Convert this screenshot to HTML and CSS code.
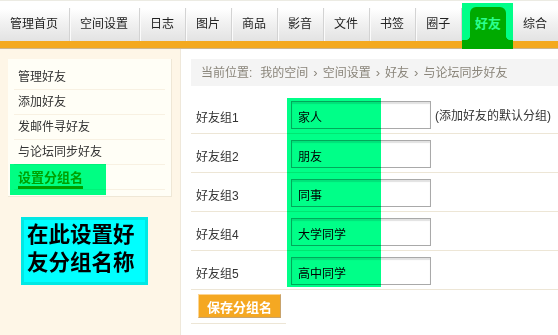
FILE: index.html
```html
<!DOCTYPE html>
<html lang="zh-CN">
<head>
  <meta charset="UTF-8">
  <title>好友 - 设置分组名</title>
  <link rel="stylesheet" href="styles.css">
</head>
<body>
  <!-- Top Navigation -->
  <div class="topbar">
    <ul class="nav">
      <li class="nav-item">管理首页</li>
      <li class="nav-item">空间设置</li>
      <li class="nav-item">日志</li>
      <li class="nav-item">图片</li>
      <li class="nav-item">商品</li>
      <li class="nav-item">影音</li>
      <li class="nav-item">文件</li>
      <li class="nav-item">书签</li>
      <li class="nav-item">圈子</li>
      <li class="nav-item current"><span class="current-tab">好友</span></li>
      <li class="nav-item last">综合</li>
    </ul>
  </div>
  <div class="orange-bar"></div>

  <div class="page">
    <!-- Side Menu -->
    <aside class="sidebar">
      <ul class="side-menu">
        <li>管理好友</li>
        <li>添加好友</li>
        <li>发邮件寻好友</li>
        <li>与论坛同步好友</li>
        <li class="active"><span>设置分组名</span></li>
      </ul>
      <div class="note">在此设置好<br>友分组名称</div>
      <div class="mark mark-side"></div>
    </aside>

    <!-- Main Content -->
    <main class="main">
      <div class="crumb">
        <span class="crumb-lead">当前位置:</span>我的空间<span class="sep">&rsaquo;</span>空间设置<span class="sep">&rsaquo;</span>好友<span class="sep">&rsaquo;</span>与论坛同步好友
      </div>

      <div class="group-row">
        <label class="group-label">好友组1</label>
        <input class="group-input" type="text" value="家人">
        <span class="hint">(添加好友的默认分组)</span>
      </div>
      <div class="group-row">
        <label class="group-label">好友组2</label>
        <input class="group-input" type="text" value="朋友">
      </div>
      <div class="group-row">
        <label class="group-label">好友组3</label>
        <input class="group-input" type="text" value="同事">
      </div>
      <div class="group-row">
        <label class="group-label">好友组4</label>
        <input class="group-input" type="text" value="大学同学">
      </div>
      <div class="group-row">
        <label class="group-label">好友组5</label>
        <input class="group-input" type="text" value="高中同学">
      </div>

      <div class="save-row">
        <button class="save-button">保存分组名</button>
      </div>

      <div class="mark mark-main"></div>
    </main>
  </div>
</body>
</html>
```

FILE: styles.css
```css
/* General Reset and Layout */
body {
  margin: 0;
  font-family: "Liberation Sans", "Noto Sans CJK SC", sans-serif;
  font-size: 12px;
  color: #333;
  background-color: #fff;
  height: 100vh;
  overflow: hidden;
  display: flex;
  flex-direction: column;
}

ul {
  margin: 0;
  padding: 0;
  list-style: none;
}

/* Top navigation */
.topbar {
  flex: none;
  height: 40px;
  border-top: 1px solid #ecebe3;
  background: linear-gradient(#fff 0, #fff 8px, #f1f1f1 22px, #e3e3e3 40px);
}

.nav {
  display: flex;
  align-items: flex-end;
  height: 100%;
}

.nav-item {
  height: 33px;
  line-height: 33px;
  padding: 0 11px 0 10px;
  border-right: 1px solid #d3d3d3;
  box-shadow: 1px 0 0 #fbfbfb;
  color: #222;
  white-space: nowrap;
}

.nav-item.last {
  border-right: none;
  box-shadow: none;
}

.nav-item.current {
  position: relative;
  z-index: 2;
  height: 46px;
  margin-bottom: -8px;
  padding: 4px 7px 0 8px;
  box-sizing: border-box;
  width: 59px;
  border-right: none;
  box-shadow: none;
  background: linear-gradient(#00ff88 0, #00ff88 37px, #00aa00 37px);
}

.current-tab {
  position: relative;
  display: block;
  height: 42px;
  line-height: 34px;
  text-align: center;
  border-radius: 6px 6px 0 0;
  background-color: #00aa00;
  color: #2bff8e;
  font-weight: bold;
  font-size: 13px;
}

/* little concave corners where the tab meets the bar */
.current-tab::before,
.current-tab::after {
  content: "";
  position: absolute;
  bottom: 9px;
  width: 5px;
  height: 5px;
}

.current-tab::before {
  left: -5px;
  background: radial-gradient(circle at 0 0, transparent 5px, #00aa00 5.5px);
}

.current-tab::after {
  right: -5px;
  background: radial-gradient(circle at 100% 0, transparent 5px, #00aa00 5.5px);
}

.orange-bar {
  flex: none;
  height: 7px;
  background-color: #f4a91f;
  border-bottom: 1px solid #cdb58c;
}

/* Page body */
.page {
  flex: 1;
  display: flex;
  min-height: 0;
}

.sidebar {
  position: relative;
  flex: none;
  width: 164px;
  padding: 10px 8px;
  background-color: #fef6e7;
  border-right: 1px solid #efe8da;
}

.side-menu {
  padding: 6px 6px 6px;
  background-color: #fffef6;
  border-right: 1px solid #efe7d6;
  border-bottom: 1px solid #efe7d6;
}

.side-menu li {
  height: 24px;
  line-height: 25px;
  padding-left: 4px;
  border-bottom: 1px solid #f8f1e2;
}

.side-menu li.active span {
  position: relative;
  z-index: 1;
  color: #00a000;
  font-weight: bold;
  font-size: 13px;
  text-decoration: underline;
  text-decoration-thickness: 3px;
  text-underline-offset: 4px;
}

.note {
  width: 118px;
  margin: 20px 0 0 13px;
  padding: 1px 0 5px 3px;
  line-height: 28px;
  font-size: 21.5px;
  font-weight: bold;
  color: #000;
  background-color: #00ffff;
  border: 3px solid #00e8e4;
  white-space: nowrap;
}

/* green highlight annotations */
.mark {
  position: absolute;
  background-color: #00ff88;
  mix-blend-mode: multiply;
}

.mark-side {
  left: 10px;
  top: 115px;
  width: 96px;
  height: 31px;
}

.mark-main {
  left: 106px;
  top: 49px;
  width: 94px;
  height: 189px;
}

.main {
  position: relative;
  flex: 1;
  padding: 10px 0 0 10px;
}

.crumb {
  height: 27px;
  line-height: 27px;
  padding-left: 10px;
  margin-bottom: 9px;
  background-color: #f4f4f4;
  color: #8a857a;
  font-size: 12px;
  white-space: nowrap;
}

.crumb-lead {
  margin-right: 8px;
}

.crumb .sep {
  margin: 0 5px;
  font-size: 13px;
}

.group-row {
  display: flex;
  align-items: flex-start;
  height: 28px;
  padding: 6px 0 4px;
  border-bottom: 1px solid #ede6d6;
}

.group-label {
  width: 95px;
  padding: 10px 0 0 5px;
  line-height: 14px;
}

.group-input {
  width: 140px;
  height: 28px;
  box-sizing: border-box;
  margin: 0;
  padding: 2px 0 0 6px;
  border: 1px solid #a9a9a9;
  box-shadow: inset 0 2px 1px #e2e2e2;
  font-family: "Liberation Sans", "Noto Sans CJK SC", sans-serif;
  font-size: 12px;
  color: #000;
  background-color: #fff;
}

.hint {
  margin-left: 4px;
  line-height: 30px;
  white-space: nowrap;
}

.save-row {
  width: 88px;
  padding: 4px 0 5px 7px;
  border-bottom: 1px solid #ede6d6;
}

.save-button {
  display: block;
  width: 83px;
  height: 24px;
  padding: 0;
  background-color: #f5a822;
  border: 1px solid;
  border-color: #fdd592 #c8a36c #c8a36c #fdd592;
  color: #fff;
  font-family: "Liberation Sans", "Noto Sans CJK SC", sans-serif;
  font-weight: bold;
  font-size: 13px;
  cursor: pointer;
}
```
